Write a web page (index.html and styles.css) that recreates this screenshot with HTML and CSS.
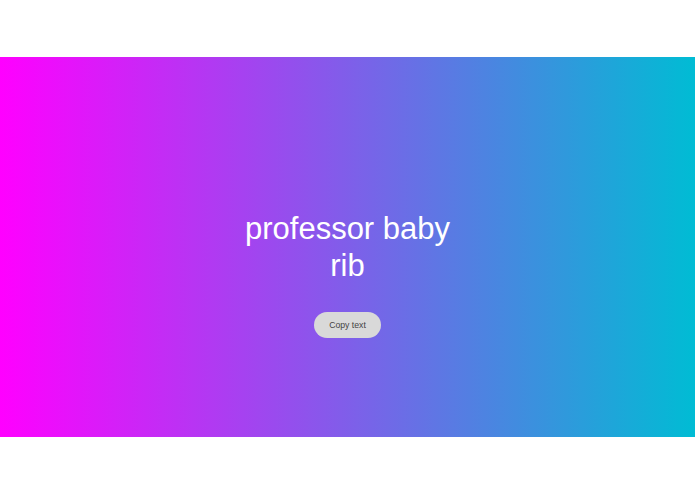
FILE: index.html
```html
<!DOCTYPE html>
<html lang="en">
<head>
<meta charset="utf-8">
<title>Text</title>
<link rel="stylesheet" href="styles.css">
</head>
<body>
<main class="band">
  <h1 class="phrase">professor baby rib</h1>
  <button class="copy-btn" type="button">Copy text</button>
</main>
</body>
</html>
```
FILE: styles.css
```css
html, body {
  margin: 0;
  padding: 0;
  background: #ffffff;
}
body {
  min-height: 100vh;
  display: flex;
  align-items: center;
  font-family: "Liberation Sans", Arial, sans-serif;
}
.band {
  box-sizing: border-box;
  width: 100%;
  height: 380px;
  padding-top: 54px;
  background: linear-gradient(to right, #ff00ff, #00bcd4);
  display: flex;
  flex-direction: column;
  align-items: center;
  justify-content: center;
}
.phrase {
  margin: 0 0 28px;
  width: 230px;
  font-size: 31px;
  font-weight: normal;
  line-height: 37px;
  color: #ffffff;
  text-align: center;
}
.copy-btn {
  height: 26px;
  padding: 0 15px;
  border: none;
  border-radius: 13px;
  background: #d9d9d9;
  color: #444444;
  font-family: "Liberation Sans", Arial, sans-serif;
  font-size: 8.7px;
  cursor: pointer;
}
```
